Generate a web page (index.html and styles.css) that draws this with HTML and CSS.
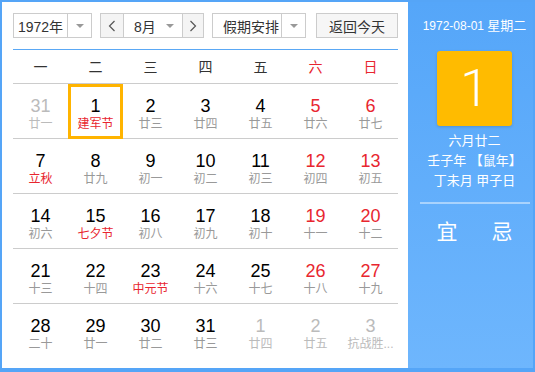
FILE: index.html
```html
<!DOCTYPE html>
<html lang="zh">
<head>
  <meta charset="UTF-8">
  <title>万年历</title>
  <link rel="stylesheet" href="styles.css">
</head>
<body>

<div class="calendar">
  <div class="main">
    <div class="toolbar">
      <div class="select year">
        <span class="select-text">1972年</span>
        <span class="select-arrow"><i class="caret"></i></span>
      </div>
      <div class="month-group">
        <span class="nav-btn">
          <svg width="8" height="12" viewBox="0 0 8 12"><polyline points="6.5,1 1.5,6 6.5,11" fill="none" stroke="#555" stroke-width="1.2"/></svg>
        </span>
        <span class="month-text">8月<i class="caret"></i></span>
        <span class="nav-btn">
          <svg width="8" height="12" viewBox="0 0 8 12"><polyline points="1.5,1 6.5,6 1.5,11" fill="none" stroke="#555" stroke-width="1.2"/></svg>
        </span>
      </div>
      <div class="select holiday">
        <span class="select-text">假期安排</span>
        <span class="select-arrow"><i class="caret"></i></span>
      </div>
      <div class="today-btn">返回今天</div>
    </div>

    <div class="weekdays">
      <span>一</span><span>二</span><span>三</span><span>四</span><span>五</span>
      <span class="red">六</span><span class="red">日</span>
    </div>

    <div class="days">
      <div class="day other"><b>31</b><em>廿一</em></div>
      <div class="day selected"><b>1</b><em class="fest">建军节</em></div>
      <div class="day"><b>2</b><em>廿三</em></div>
      <div class="day"><b>3</b><em>廿四</em></div>
      <div class="day"><b>4</b><em>廿五</em></div>
      <div class="day weekend"><b>5</b><em>廿六</em></div>
      <div class="day weekend"><b>6</b><em>廿七</em></div>

      <div class="day"><b>7</b><em class="fest">立秋</em></div>
      <div class="day"><b>8</b><em>廿九</em></div>
      <div class="day"><b>9</b><em>初一</em></div>
      <div class="day"><b>10</b><em>初二</em></div>
      <div class="day"><b>11</b><em>初三</em></div>
      <div class="day weekend"><b>12</b><em>初四</em></div>
      <div class="day weekend"><b>13</b><em>初五</em></div>

      <div class="day"><b>14</b><em>初六</em></div>
      <div class="day"><b>15</b><em class="fest">七夕节</em></div>
      <div class="day"><b>16</b><em>初八</em></div>
      <div class="day"><b>17</b><em>初九</em></div>
      <div class="day"><b>18</b><em>初十</em></div>
      <div class="day weekend"><b>19</b><em>十一</em></div>
      <div class="day weekend"><b>20</b><em>十二</em></div>

      <div class="day"><b>21</b><em>十三</em></div>
      <div class="day"><b>22</b><em>十四</em></div>
      <div class="day"><b>23</b><em class="fest">中元节</em></div>
      <div class="day"><b>24</b><em>十六</em></div>
      <div class="day"><b>25</b><em>十七</em></div>
      <div class="day weekend"><b>26</b><em>十八</em></div>
      <div class="day weekend"><b>27</b><em>十九</em></div>

      <div class="day last"><b>28</b><em>二十</em></div>
      <div class="day last"><b>29</b><em>廿一</em></div>
      <div class="day last"><b>30</b><em>廿二</em></div>
      <div class="day last"><b>31</b><em>廿三</em></div>
      <div class="day last other"><b>1</b><em>廿四</em></div>
      <div class="day last other"><b>2</b><em>廿五</em></div>
      <div class="day last other"><b>3</b><em>抗战胜...</em></div>
    </div>
  </div>

  <div class="side">
    <div class="side-date">1972-08-01 <span>星期二</span></div>
    <div class="big-day">1</div>
    <div class="lunar">
      <div>六月廿二</div>
      <div>壬子年 【鼠年】</div>
      <div>丁未月 甲子日</div>
    </div>
    <div class="side-line"></div>
    <div class="yiji">
      <span>宜</span><span>忌</span>
    </div>
  </div>
</div>

</body>
</html>
```

FILE: styles.css
```css
* { box-sizing: border-box; }
body { margin: 0; font-family: "Liberation Sans", "Noto Sans CJK SC", sans-serif; color: #333; }
.calendar { display: flex; width: 535px; height: 372px; border: 2px solid #55a5f7; border-bottom-width: 4px; background: #fff; }

/* calendario */
.main { width: 406px; padding: 11px 10px 0 11px; }
.toolbar { display: flex; height: 37px; padding-bottom: 11px; border-bottom: 1px solid #5aa8f5; }
.select { display: flex; height: 25px; border: 1px solid #ccc; background: #fff; font-size: 14px; }
.select-text { flex: 1; display: flex; align-items: center; justify-content: center; }
.select-arrow { width: 24px; border-left: 1px solid #ccc; display: flex; align-items: center; justify-content: center; }
.caret { display: inline-block; width: 0; height: 0; border-left: 4px solid transparent; border-right: 4px solid transparent; border-top: 4px solid #999; }
.year { width: 79px; margin-right: 8px; }
.holiday { width: 94px; margin-right: 10px; }
.holiday .select-text { justify-content: flex-start; padding-left: 10px; }
.month-group { display: flex; width: 104px; height: 25px; border: 1px solid #ccc; margin-right: 8px; font-size: 14px; }
.nav-btn { width: 23px; background: #f4f4f4; display: flex; align-items: center; justify-content: center; }
.nav-btn:last-child { width: 21px; border-left: 1px solid #ccc; }
.nav-btn:first-child { border-right: 1px solid #ccc; }
.month-text { flex: 1; display: flex; align-items: center; justify-content: space-between; padding: 0 8px 0 10px; }
.today-btn { width: 82px; height: 25px; border: 1px solid #ccc; background: #f6f6f6; font-size: 14px; display: flex; align-items: center; justify-content: center; }

.weekdays { display: grid; grid-template-columns: repeat(7, 55px); height: 34px; border-bottom: 1px solid #ccc; font-size: 14px; }
.weekdays span { display: flex; align-items: center; justify-content: center; padding-bottom: 1px; }
.red { color: #e8262f; }

.days { display: grid; grid-template-columns: repeat(7, 55px); }
.day { height: 55px; border-bottom: 1px solid #ccc; padding: 12px 1px 0; text-align: center; }
.day.last { border-bottom: none; }
.day b { display: block; font-weight: normal; font-size: 18px; line-height: 20px; color: #000; }
.day em { display: block; font-style: normal; font-size: 12px; line-height: 16px; color: #999; white-space: nowrap; }
.day.weekend b { color: #e8262f; }
.day em.fest { color: #e8262f; }
.day.other b, .day.other em { color: #bbb; }
.day.selected { outline: 3px solid #ffb400; outline-offset: -3px; }

/* panel lateral */
.side { flex: 1; padding: 14px 0 0 8px; background: linear-gradient(#55a6f9, #6eb6fd); color: #fff; text-align: center; }
.side-date { font-size: 12px; line-height: 20px; white-space: nowrap; }
.side-date span { font-size: 13px; }
.big-day { width: 75px; height: 75px; margin: 15px auto 0; background: #ffbb00; border-radius: 3px; box-shadow: 0 1px 3px rgba(0, 0, 0, 0.15); font-family: Roboto, "Liberation Sans", sans-serif; font-weight: 300; font-size: 52px; line-height: 75px; }
.lunar { margin-top: 5px; font-size: 13px; line-height: 20px; }
.side-line { width: 110px; height: 2px; margin: 11px auto 0; background: rgba(255, 255, 255, 0.45); }
.yiji { display: flex; justify-content: center; gap: 34px; margin-top: 15px; font-size: 21px; line-height: 26px; }
```
